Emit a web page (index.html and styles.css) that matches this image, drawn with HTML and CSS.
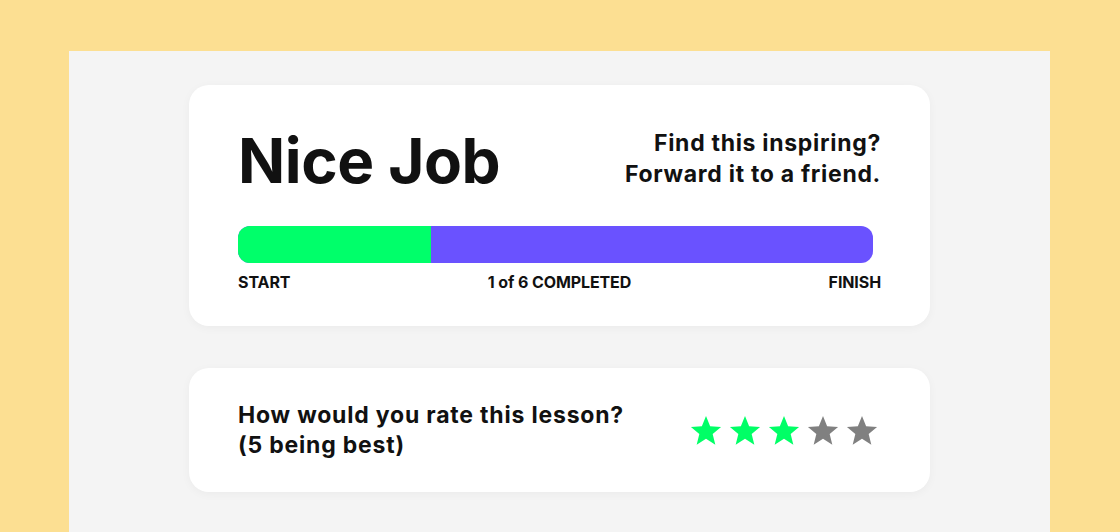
FILE: index.html
```html
<!DOCTYPE html>
<html lang="en">
<head>
    <meta charset="UTF-8">
    <meta name="viewport" content="width=device-width, initial-scale=1.0">
    <title>Lesson Complete</title>
    <link rel="stylesheet" href="styles.css">
</head>
<body>
    <div class="panel">
        <div class="card progress-card">
            <div class="card-top">
                <h1 class="title">Nice Job</h1>
                <div class="share">Find this inspiring?<br>Forward it to a friend.</div>
            </div>
            <div class="bar">
                <div class="bar-fill"></div>
            </div>
            <div class="bar-labels">
                <span>START</span>
                <span>1 of 6 COMPLETED</span>
                <span>FINISH</span>
            </div>
        </div>

        <div class="card rating-card">
            <div class="question">How would you rate this lesson?<br>(5 being best)</div>
            <div class="stars">
                <svg class="star on" viewBox="0 0 24 24"><path d="M12 1.5l3.1 7.6 8.2.6-6.3 5.3 2 8-7-4.4-7 4.4 2-8L.7 9.7l8.2-.6z"/></svg>
                <svg class="star on" viewBox="0 0 24 24"><path d="M12 1.5l3.1 7.6 8.2.6-6.3 5.3 2 8-7-4.4-7 4.4 2-8L.7 9.7l8.2-.6z"/></svg>
                <svg class="star on" viewBox="0 0 24 24"><path d="M12 1.5l3.1 7.6 8.2.6-6.3 5.3 2 8-7-4.4-7 4.4 2-8L.7 9.7l8.2-.6z"/></svg>
                <svg class="star" viewBox="0 0 24 24"><path d="M12 1.5l3.1 7.6 8.2.6-6.3 5.3 2 8-7-4.4-7 4.4 2-8L.7 9.7l8.2-.6z"/></svg>
                <svg class="star" viewBox="0 0 24 24"><path d="M12 1.5l3.1 7.6 8.2.6-6.3 5.3 2 8-7-4.4-7 4.4 2-8L.7 9.7l8.2-.6z"/></svg>
            </div>
        </div>
    </div>
</body>
</html>
```

FILE: styles.css
```css
body {
    font-family: Inter, "Liberation Sans", sans-serif;
    background-color: #FCDF92;
    margin: 0;
    padding: 0;
    color: #111111;
}
.panel {
    margin: 51px 0 0 69px;
    width: 981px;
    height: 481px;
    background-color: #F4F4F4;
    padding: 34px 120px 0;
    box-sizing: border-box;
    display: flex;
    flex-direction: column;
    gap: 42px;
}
.card {
    background-color: #ffffff;
    border-radius: 20px;
    box-shadow: 0 2px 10px rgba(0, 0, 0, 0.04);
    padding: 0 49px;
}
.progress-card {
    height: 241px;
    box-sizing: border-box;
    padding-top: 38px;
}
.card-top {
    display: flex;
    justify-content: space-between;
    align-items: flex-start;
}
.title {
    margin: 0;
    font-size: 62px;
    font-weight: 700;
    letter-spacing: -0.4px;
    line-height: 76px;
}
.share {
    text-align: right;
    font-size: 23px;
    font-weight: 700;
    line-height: 31px;
    letter-spacing: 0.7px;
    padding-top: 5px;
}
.bar {
    margin: 27px 8px 0 0;
    height: 37px;
    border-radius: 12px;
    background-color: #6A52FF;
    overflow: hidden;
}
.bar-fill {
    width: 193px;
    height: 100%;
    background-color: #00FF6A;
}
.bar-labels {
    display: flex;
    justify-content: space-between;
    margin-top: 9px;
    font-size: 16px;
    font-weight: 700;
    letter-spacing: -0.1px;
}
.rating-card {
    height: 124px;
    box-sizing: border-box;
    display: flex;
    align-items: center;
    justify-content: space-between;
    padding-right: 52px;
}
.question {
    font-size: 23px;
    font-weight: 700;
    line-height: 30px;
    letter-spacing: 0.8px;
}
.stars {
    display: flex;
    gap: 7px;
}
.star {
    width: 32px;
    height: 32px;
    fill: #808080;
}
.star.on {
    fill: #00FF66;
}
```
